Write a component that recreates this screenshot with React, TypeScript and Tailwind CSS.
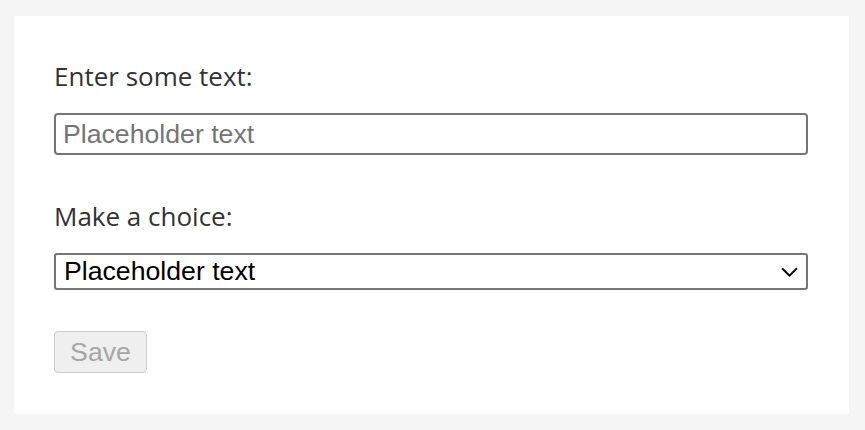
import React from "react";

export default function App() {
  return (
    <div className="w-[865px] h-[430px] bg-[#f5f5f5] pt-[16px] overflow-hidden">
      <div className="ml-[14px] w-[835px] h-[398px] bg-white px-[40px] pt-[42px] flex flex-col items-start">
        <label className="block font-['Open_Sans',sans-serif] text-[26px] leading-[36px] text-[#333333]">
          Enter some text:
        </label>
        <input
          type="text"
          placeholder="Placeholder text"
          className="mt-[19px] w-[754px] h-[42px] border-2 border-[#767676] rounded-[4px] px-[7px] font-['Liberation_Sans',Arial,sans-serif] text-[26.67px] text-black placeholder:text-[#757575] bg-white outline-none"
        />
        <label className="mt-[43px] block font-['Open_Sans',sans-serif] text-[26px] leading-[36px] text-[#333333]">
          Make a choice:
        </label>
        <div className="relative mt-[19px] w-[754px] h-[37px]">
          <select
            className="appearance-none w-full h-full border-2 border-[#767676] rounded-[3px] pl-[8px] pr-[40px] font-['Liberation_Sans',Arial,sans-serif] text-[26.67px] leading-[33px] text-black bg-white outline-none"
            defaultValue="p"
          >
            <option value="p">Placeholder text</option>
          </select>
          <svg
            className="absolute right-[10px] top-[14px] pointer-events-none"
            width="17"
            height="10"
            viewBox="0 0 17 10"
            fill="none"
          >
            <path d="M1 1.2 L8.5 8.6 L16 1.2" stroke="#000" strokeWidth="2" />
          </svg>
        </div>
        <button
          disabled
          className="mt-[41px] w-[93px] h-[42px] border-[1.5px] border-[#cfcfcf] bg-[#efefef] rounded-[4px] font-['Liberation_Sans',Arial,sans-serif] text-[26.67px] text-[#a6a6a6]"
        >
          Save
        </button>
      </div>
    </div>
  );
}
